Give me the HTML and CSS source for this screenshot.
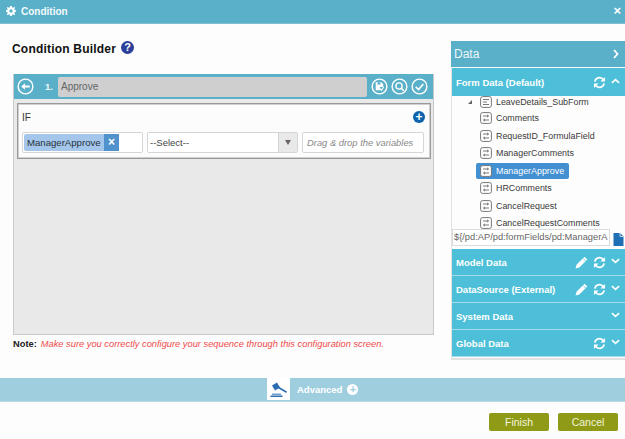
FILE: index.html
```html
<!DOCTYPE html>
<html lang="en">
<head>
<meta charset="utf-8">
<title>Condition</title>
<link rel="stylesheet" href="styles.css">
</head>
<body>
<svg class="defs" width="0" height="0" aria-hidden="true">
  <symbol id="i-sync" viewBox="0 0 14 14">
    <path d="M2 6a5 5 0 0 1 8.600-2.600L12 5" fill="none" stroke="#fff" stroke-width="1.800"/><path d="M13 1v5H8z" fill="#fff"/>
    <path d="M12 8a5 5 0 0 1-8.600 2.600L2 9" fill="none" stroke="#fff" stroke-width="1.800"/><path d="M1 13V8h5z" fill="#fff"/>
  </symbol>
  <symbol id="i-up" viewBox="0 0 10 6"><path d="M1 5l4-3.500L9 5" fill="none" stroke="#fff" stroke-width="1.800"/></symbol>
  <symbol id="i-down" viewBox="0 0 10 6"><path d="M1 1l4 3.500L9 1" fill="none" stroke="#fff" stroke-width="1.800"/></symbol>
  <symbol id="i-pencil" viewBox="0 0 13 13"><path d="M9.500.7l2.800 2.800-8 8L.6 12.400l.9-3.700z" fill="#fff"/><path d="M8 2.400l2.700 2.700" stroke="#4dbfd8" stroke-width=".8"/></symbol>
  <symbol id="i-field" viewBox="0 0 12 12">
    <rect x=".6" y=".6" width="10.800" height="10.800" rx="2" fill="#fff" stroke="#777" stroke-width="1"/>
    <path d="M3 4h5.500M7 2.800L8.500 4 7 5.200M9 8H3.500M5 6.800L3.500 8 5 9.200" fill="none" stroke="#777" stroke-width="1"/>
  </symbol>
</svg>
<div class="dialog">
  <header class="titlebar">
    <span class="title-left">
      <svg class="gear" viewBox="0 0 12 12"><path d="M5 0h2l.3 1.600 1.200.5L9.900 1.200l1.100 1-1 1.400.5 1.200L12 5v2l-1.500.3-.5 1.200.9 1.300-1.100 1.200-1.300-1-1.200.5L7 12H5l-.3-1.500-1.200-.5-1.300 1L1 9.800l1-1.300-.5-1.200L0 7V5l1.500-.2.500-1.200-1-1.400 1.100-1 1.400.9 1.200-.5z" fill="#fff"/><circle cx="6" cy="6" r="2" fill="#5aafc9"/></svg>
      <span>Condition</span>
    </span>
    <span class="close">×</span>
  </header>

  <div class="main">
    <section class="builder">
      <h1 class="heading">Condition Builder <span class="help">?</span></h1>
      <div class="panel">
        <div class="toolbar">
          <svg class="tool first" viewBox="0 0 18 18"><circle cx="9" cy="9" r="7.800" fill="none" stroke="#fff" stroke-width="1.500"/><path d="M4.500 9l4-3.500V8h5v2h-5v2.500z" fill="#fff"/></svg>
          <span class="step">1.</span>
          <span class="name">Approve</span>
          <svg class="tool" viewBox="0 0 18 18"><circle cx="9" cy="9" r="7.800" fill="none" stroke="#fff" stroke-width="1.500"/><path d="M5 4.500h6l2 2v3H9.500V13H5z" fill="#fff"/><path d="M7 4.500h3V7H7z" fill="#5aafc9"/><path d="M9.500 11l1.500 2 2.500-3.500" fill="none" stroke="#fff" stroke-width="1.200"/></svg>
          <svg class="tool" viewBox="0 0 18 18"><circle cx="9" cy="9" r="7.800" fill="none" stroke="#fff" stroke-width="1.500"/><circle cx="8.500" cy="8.500" r="3.300" fill="none" stroke="#fff" stroke-width="1.500"/><path d="M11 11l2.500 2.500" stroke="#fff" stroke-width="1.700"/></svg>
          <svg class="tool" viewBox="0 0 18 18"><circle cx="9" cy="9" r="7.800" fill="none" stroke="#fff" stroke-width="1.500"/><path d="M5 9.500l3 2.800 5-6" fill="none" stroke="#fff" stroke-width="1.800"/></svg>
        </div>
        <div class="canvas">
          <div class="if-box">
            <div class="if-head">
              <span>IF</span>
              <span class="add">+</span>
            </div>
            <div class="if-row">
              <div class="field var-field">
                <span class="chip"><span class="chip-text">ManagerApprove</span><span class="chip-x">×</span></span>
              </div>
              <div class="field select-field">
                <span class="select-text">--Select--</span>
                <span class="select-arrow"></span>
              </div>
              <div class="field drop-field">Drag &amp; drop the variables</div>
            </div>
          </div>
        </div>
      </div>
      <p class="note"><b>Note:</b><i>Make sure you correctly configure your sequence through this configuration screen.</i></p>
    </section>

    <aside class="data">
      <div class="data-head"><span>Data</span><svg class="chev-right" viewBox="0 0 6 10"><path d="M1 1l3.500 4L1 9" fill="none" stroke="#fff" stroke-width="1.800"/></svg></div>
      <div class="acc acc-open">
        <span class="acc-label">Form Data (Default)</span>
        <svg class="ic-sync"><use href="#i-sync"/></svg>
        <svg class="ic-chev"><use href="#i-up"/></svg>
      </div>
      <ul class="tree">
        <li class="node parent"><span class="twist"></span><svg class="ic-field" viewBox="0 0 12 12"><rect x=".6" y=".6" width="10.800" height="10.800" rx="2" fill="#fff" stroke="#777"/><path d="M3 3.500h6M3 6h4M3 8.500h6" stroke="#777"/></svg><span>LeaveDetails_SubForm</span></li>
        <li class="node"><svg class="ic-field"><use href="#i-field"/></svg><span>Comments</span></li>
        <li class="node"><svg class="ic-field"><use href="#i-field"/></svg><span>RequestID_FormulaField</span></li>
        <li class="node"><svg class="ic-field"><use href="#i-field"/></svg><span>ManagerComments</span></li>
        <li class="node selected"><svg class="ic-field"><use href="#i-field"/></svg><span>ManagerApprove</span></li>
        <li class="node"><svg class="ic-field"><use href="#i-field"/></svg><span>HRComments</span></li>
        <li class="node"><svg class="ic-field"><use href="#i-field"/></svg><span>CancelRequest</span></li>
        <li class="node"><svg class="ic-field"><use href="#i-field"/></svg><span>CancelRequestComments</span></li>
      </ul>
      <div class="path-row">
        <span class="path-input">${/pd:AP/pd:formFields/pd:ManagerA</span>
        <svg class="copy" viewBox="0 0 10 13"><path d="M0 0h6.500L10 3.500V13H0z" fill="#1f6fb5"/><path d="M6.500 0v3.500H10" fill="none" stroke="#fff" stroke-width=".7"/></svg>
      </div>
      <div class="acc"><span class="acc-label">Model Data</span><svg class="ic-pencil"><use href="#i-pencil"/></svg><svg class="ic-sync"><use href="#i-sync"/></svg><svg class="ic-chev"><use href="#i-down"/></svg></div>
      <div class="acc"><span class="acc-label">DataSource (External)</span><svg class="ic-pencil"><use href="#i-pencil"/></svg><svg class="ic-sync"><use href="#i-sync"/></svg><svg class="ic-chev"><use href="#i-down"/></svg></div>
      <div class="acc"><span class="acc-label">System Data</span><svg class="ic-chev"><use href="#i-down"/></svg></div>
      <div class="acc"><span class="acc-label">Global Data</span><svg class="ic-sync"><use href="#i-sync"/></svg><svg class="ic-chev"><use href="#i-down"/></svg></div>
    </aside>
  </div>

  <div class="advanced">
    <span class="gavel-box">
      <svg viewBox="0 0 23 22" class="gavel"><path d="M5 7.500l5-3 3 5-5 3z" fill="#2a6db0"/><path d="M11.500 8.500l8.500 5-.8 1.500-8.500-5z" fill="#2a6db0"/><path d="M5 15.500h9v1.500H5z" fill="#6d9fd0"/><path d="M3.500 17.500h12V19h-12z" fill="#2a6db0"/></svg>
    </span>
    <span class="adv-label">Advanced</span>
    <span class="adv-plus">+</span>
  </div>

  <footer class="footer">
    <button class="btn" type="button">Finish</button>
    <button class="btn" type="button">Cancel</button>
  </footer>
</div>
</body>
</html>
```

FILE: styles.css
```css
* { box-sizing: border-box; }
html, body { margin: 0; padding: 0; }
body { width: 625px; height: 439px; overflow: hidden; background: #fdfdfd; font-family: "Liberation Sans", Arial, sans-serif; }
.defs { display: block; height: 0; }
.dialog { width: 625px; height: 439px; display: flex; flex-direction: column; overflow: hidden; }

.titlebar { height: 24px; flex: none; background: #5aafc9; border-bottom: 1px solid #7fc0d4; color: #f2fafc; display: flex; align-items: center; justify-content: space-between; padding: 0 4px 1px 6px; font-size: 10px; font-weight: bold; }
.title-left { display: flex; align-items: center; gap: 5px; }
.gear { width: 10px; height: 10px; }
.close { font-size: 13px; line-height: 14px; color: #fff; }

.main { flex: 1; display: flex; min-height: 0; height: 354px; }
.builder { width: 451px; flex: none; padding: 0 17px 0 13px; }
.heading { margin: 0 0 0 -1px; height: 50px; padding-top: 18px; font-size: 12px; line-height: 15px; font-weight: bold; color: #111; letter-spacing: .2px; display: flex; align-items: flex-start; gap: 5px; }
.help { width: 13px; height: 13px; margin-top: -1px; border-radius: 50%; background: #2b3f9a; color: #fff; font-size: 11px; line-height: 13px; text-align: center; letter-spacing: 0; }

.panel { width: 421px; height: 261px; background: #e9e9e9; border: 1px solid #c9c9c9; border-top: 0; display: flex; flex-direction: column; }
.toolbar { height: 25px; flex: none; background: #5aafc9; display: flex; align-items: center; padding: 0 5px 0 3px; gap: 3px; }
.tool { width: 17px; height: 17px; flex: none; }
.tool.first { margin-right: 8px; }
.step { color: #eef8fb; font-size: 9.500px; font-weight: bold; width: 10px; }
.name { flex: 1; height: 20px; background: #cfcfcf; border-radius: 2px; color: #666; font-size: 10px; line-height: 20px; padding-left: 3px; margin-right: 1px; }

.canvas { flex: 1; padding: 4px 2px 0 3px; }
.if-box { height: 56px; background: #fcfcfc; border: 1px solid #9a9a9a; box-shadow: inset 0 0 0 1px #d0d0d0; padding: 6px 4px 0 4px; }
.if-head { display: flex; justify-content: space-between; align-items: center; height: 14px; font-size: 10px; color: #333; margin-bottom: 8px; }
.add { width: 12px; height: 12px; border-radius: 50%; background: #0d62ad; color: #fff; font-size: 12px; line-height: 12px; font-weight: bold; text-align: center; margin-right: 1px; }
.if-row { display: flex; gap: 4px; }
.field { height: 21px; background: #fff; border: 1px solid #d6d6d6; border-radius: 2px; font-size: 9.500px; }
.var-field { width: 121px; padding: 1px; }
.chip { display: inline-flex; height: 17px; background: #a4c6ea; border-radius: 2px; align-items: center; padding-left: 3px; color: #27333f; }
.chip-text { width: 77px; white-space: nowrap; font-size: 9.600px; }
.chip-x { width: 15px; height: 17px; background: #4f92cc; color: #fff; font-size: 12px; font-weight: bold; line-height: 17px; text-align: center; }
.select-field { width: 151px; display: flex; align-items: center; padding-left: 2px; color: #444; }
.select-text { flex: 1; }
.select-arrow { width: 19px; height: 19px; background: #e9e9e9; border-left: 1px solid #d6d6d6; display: flex; align-items: center; justify-content: center; }
.select-arrow::after { content: ""; border-left: 3px solid transparent; border-right: 3px solid transparent; border-top: 5px solid #6b6360; }
.drop-field { width: 122px; padding-left: 4px; line-height: 19px; color: #888; font-style: italic; font-size: 9.400px; white-space: nowrap; }

.note { margin: 3px 0 0 0; font-size: 9.300px; line-height: 12px; display: flex; gap: 4px; white-space: nowrap; }
.note b { color: #222; }
.note i { color: #f04b4b; }

.data { width: 174px; flex: none; margin-top: 17px; height: 319px; border-bottom: 2px solid #e2e2e2; border-left: 1px solid #e2e2e2; display: flex; flex-direction: column; }
.data-head { height: 26px; flex: none; background: #5aafc9; color: #eef8fb; font-size: 12px; display: flex; align-items: center; justify-content: space-between; padding: 0 6px 0 3px; margin-left: -1px; margin-bottom: 1px; }
.chev-right { width: 6px; height: 10px; }
.acc { height: 27px; flex: none; background: #4dbfd8; border-bottom: 1px solid #a5dbe8; color: #fff; font-size: 9.500px; font-weight: bold; display: flex; align-items: center; padding: 0 5px 0 4px; gap: 5px; }
.acc-open { height: 28px; border-bottom: 0; }
.acc-label { flex: 1; white-space: nowrap; }
.ic-sync { width: 13px; height: 13px; }
.ic-pencil { width: 13px; height: 13px; }
.ic-chev { width: 9px; height: 6px; margin-bottom: 3px; }

.tree { list-style: none; margin: 0; padding: 0; height: 133px; overflow: hidden; background: #fdfdfd; font-size: 8.900px; color: #3a3a3a; }
.node { height: 17.500px; display: flex; align-items: center; gap: 4px; padding-left: 28px; white-space: nowrap; }
.node.parent { padding-left: 16px; height: 12px; margin-bottom: 1.500px; }
.twist { width: 0; height: 0; border-bottom: 4px solid #666; border-left: 4px solid transparent; margin-right: 4px; }
.ic-field { width: 12px; height: 12px; flex: none; }
.node.selected { margin: .75px 0 .75px 24px; padding-left: 4px; width: 93px; height: 16px; background: #428fd2; border-radius: 2px; color: #fff; }

.path-row { height: 20px; flex: none; display: flex; align-items: flex-start; background: #fdfdfd; }
.path-input { width: 158px; height: 17px; white-space: nowrap; background: #fff; border: 1px solid #dcdcdc; font-size: 9.300px; line-height: 15px; color: #666; padding-left: 1px; }
.copy { width: 11px; height: 13px; margin: 4px 0 0 3px; }

.advanced { height: 24px; flex: none; background: #9fcfdf; border-bottom: 1px solid #b5dbe7; display: flex; align-items: center; padding-left: 267px; }
.gavel-box { width: 23px; height: 22px; background: #fff; display: flex; margin-bottom: 1px; }
.gavel { width: 23px; height: 22px; }
.adv-label { color: #fff; font-size: 9.500px; font-weight: bold; margin-left: 7px; }
.adv-plus { width: 11px; height: 11px; margin-left: 5px; border-radius: 50%; background: #fff; color: #9fcfdf; font-size: 11px; font-weight: bold; line-height: 11px; text-align: center; }

.footer { height: 37px; flex: none; display: flex; justify-content: flex-end; gap: 9px; padding: 11px 7px 0 0; }
.btn { width: 60px; height: 18px; padding: 0; border: 0; border-radius: 2px; background: #8f9a17; color: #f3f5dc; font-family: "Liberation Sans", Arial, sans-serif; font-size: 10.500px; }
```
